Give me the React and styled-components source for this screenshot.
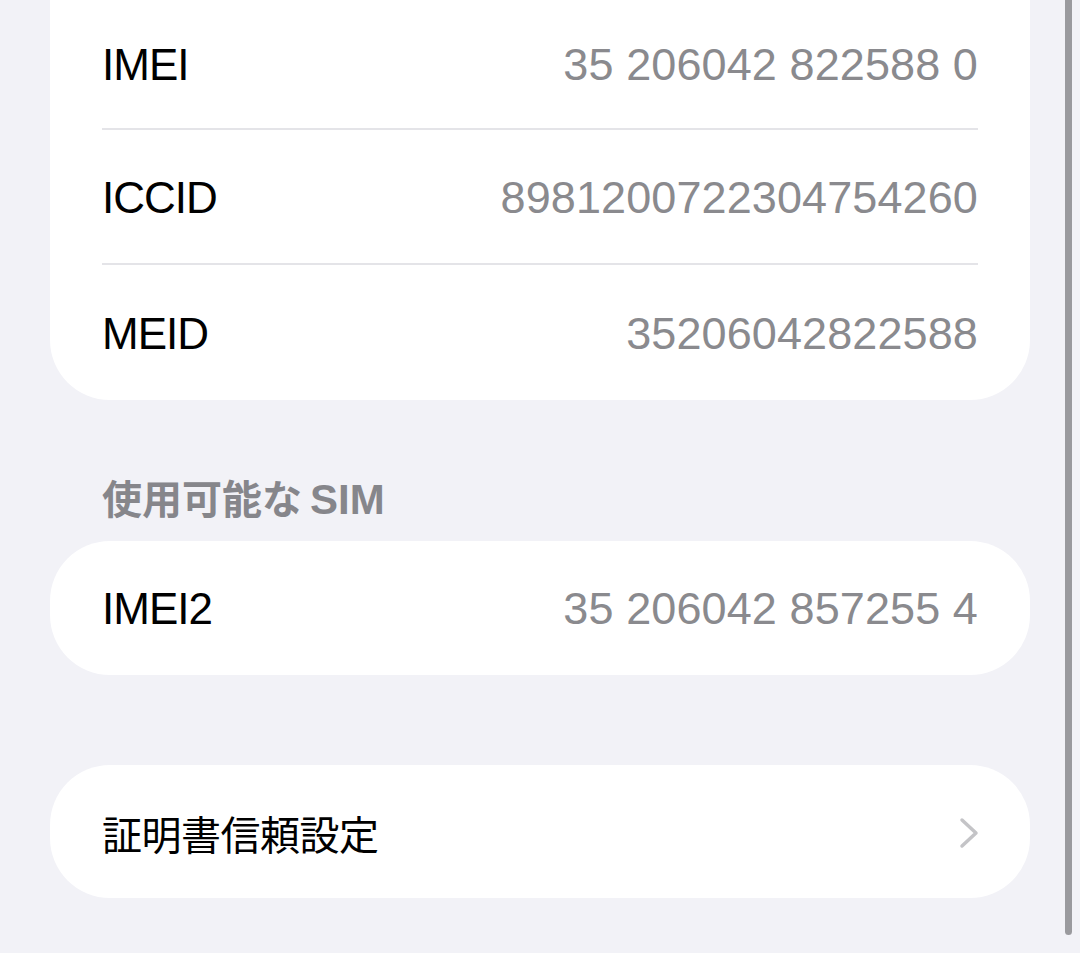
import React from "react";
import styled, { createGlobalStyle } from "styled-components";

const GlobalStyle = createGlobalStyle`
  html, body {
    margin: 0;
    padding: 0;
    background: #f2f2f7;
  }
  body {
    font-family: "Liberation Sans", "Noto Sans CJK JP", sans-serif;
    -webkit-font-smoothing: antialiased;
  }
`;

const Page = styled.div`
  position: relative;
  width: 1080px;
  height: 953px;
  overflow: hidden;
  box-sizing: border-box;
  padding: 0 50px;
  background: #f2f2f7;
`;

const Card = styled.div`
  background: #ffffff;
  border-radius: ${(p) => (p.$clipped ? "0 0 60px 60px" : "60px")};
  margin-top: ${(p) => p.$gap || 0}px;
  overflow: hidden;
`;

const Row = styled.div`
  height: ${(p) => p.$height || 134}px;
  display: flex;
  align-items: center;
  justify-content: space-between;
  margin: 0 52px;
  padding-top: 2px;
  border-bottom: ${(p) => (p.$divider ? "2px solid #e4e4e8" : "none")};
  box-sizing: border-box;
`;

const Label = styled.span`
  font-size: ${(p) => (p.$cjk ? 40 : 44)}px;
  color: #000000;
  letter-spacing: ${(p) => (p.$cjk ? "-0.5px" : "-1px")};
`;

const Value = styled.span`
  font-size: 45px;
  color: #8a8a8e;
  letter-spacing: 0.1px;
`;

const SectionHeader = styled.div`
  margin: 76px 52px 17px;
  height: 48px;
  line-height: 48px;
  font-size: 40px;
  font-weight: 600;
  color: #86868b;
  span {
    font-family: "Liberation Sans", sans-serif;
    font-size: 42px;
    margin-left: 8px;
  }
`;

const Chevron = styled.svg`
  width: 22px;
  height: 32px;
  margin-right: -2px;
`;

const ScrollIndicator = styled.div`
  position: absolute;
  top: -20px;
  right: 8px;
  width: 7px;
  height: 955px;
  border-radius: 4px;
  background: #9a9a9e;
`;

const infoRows = [
  { label: "IMEI", value: "35 206042 822588 0", height: 130 },
  { label: "ICCID", value: "8981200722304754260", height: 135 },
  { label: "MEID", value: "35206042822588", height: 135 },
];

export default function App() {
  return (
    <>
      <GlobalStyle />
      <Page>
        <Card $clipped>
          {infoRows.map((row, i) => (
            <Row key={row.label} $height={row.height} $divider={i < infoRows.length - 1}>
              <Label>{row.label}</Label>
              <Value>{row.value}</Value>
            </Row>
          ))}
        </Card>

        <SectionHeader>
          使用可能な<span>SIM</span>
        </SectionHeader>
        <Card>
          <Row>
            <Label>IMEI2</Label>
            <Value>35 206042 857255 4</Value>
          </Row>
        </Card>

        <Card $gap={90}>
          <Row $height={133}>
            <Label $cjk>証明書信頼設定</Label>
            <Chevron viewBox="0 0 22 32" fill="none">
              <path
                d="M4 3 L18 16 L4 29"
                stroke="#c4c4c7"
                strokeWidth="3.5"
                strokeLinecap="round"
                strokeLinejoin="round"
              />
            </Chevron>
          </Row>
        </Card>

        <ScrollIndicator />
      </Page>
    </>
  );
}
